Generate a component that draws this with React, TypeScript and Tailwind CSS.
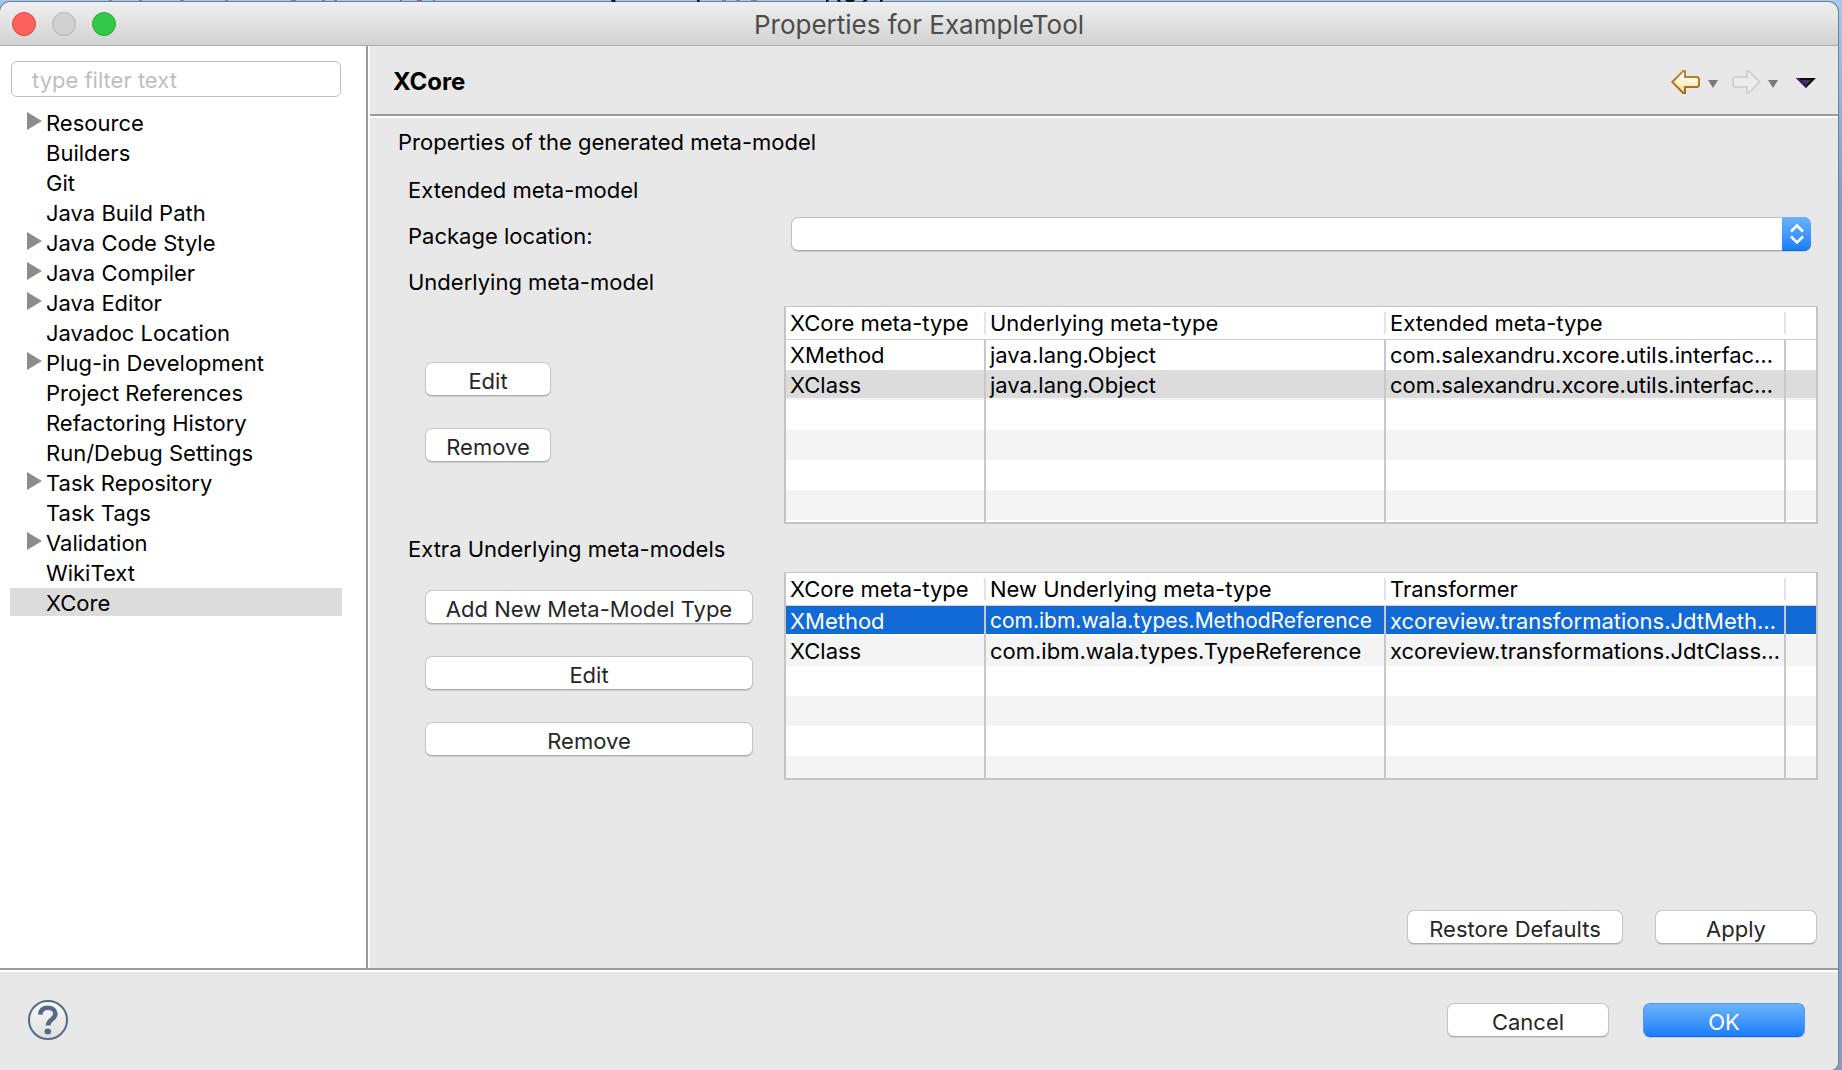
import { useId, useState } from "react";

type TreeNode = { label: string; expandable?: boolean };

const TREE: TreeNode[] = [
  { label: "Resource", expandable: true },
  { label: "Builders" },
  { label: "Git" },
  { label: "Java Build Path" },
  { label: "Java Code Style", expandable: true },
  { label: "Java Compiler", expandable: true },
  { label: "Java Editor", expandable: true },
  { label: "Javadoc Location" },
  { label: "Plug-in Development", expandable: true },
  { label: "Project References" },
  { label: "Refactoring History" },
  { label: "Run/Debug Settings" },
  { label: "Task Repository", expandable: true },
  { label: "Task Tags" },
  { label: "Validation", expandable: true },
  { label: "WikiText" },
  { label: "XCore" },
];

/* Sliver of the editor line that shows above the window. */
function EditorSliver() {
  return (
    <svg aria-hidden="true" width="900" height="2" viewBox="0 0 900 2" className="absolute top-0 left-0">
      <path
        d="M109 0h3v1h-3zM139 0h3v1h-3zM180 0h4v1h-4zM225 0h3v1h-3zM291 0h5v1h-5zM322 0h3v1h-3zM334 0h3v1h-3zM722 0h4v1h-4zM736 0h4v1h-4zM751 0h6v1h-6z"
        fill="#7089a6"
      />
      <path d="M400 0h2v1h-2zM417 0h5v1h-5zM433 0h2v1h-2z" fill="#8a5fa8" />
      <path
        d="M611 0h4l1 2h-4zM697 0h3l-1 2h-2zM826 0h3l-1 2h-2zM837 0h3l1 2h-3zM845 0h10l-2 2h-6zM864 0h4l-3 2h-3zM880 0h3l-1 2h-2z"
        fill="#141a22"
      />
    </svg>
  );
}

function TitleBar() {
  return (
    <header className="relative flex h-11 shrink-0 items-center justify-center rounded-t-[10px] border-b border-[#acacac] bg-linear-to-b from-[#f0f0f0] to-[#d2d2d2]">
      <div className="absolute left-3 flex gap-4">
        <button aria-label="Close" className="size-6 rounded-full border border-[#e0443e] bg-[#fc615d]" />
        <button aria-label="Minimize" className="size-6 rounded-full border border-[#b4b4b4] bg-[#d0d0d0]" />
        <button aria-label="Zoom" className="size-6 rounded-full border border-[#24ac38] bg-[#34c84a]" />
      </div>
      <h1 className="pt-0.5 text-[26px] leading-8 text-[#4c4c4c]">Properties for ExampleTool</h1>
    </header>
  );
}

function Sidebar() {
  const [selected, setSelected] = useState("XCore");
  return (
    <nav className="w-[370px] shrink-0 border-r-2 border-white bg-white">
      <div className="h-full border-r-2 border-[#9c9c9c] pt-[15px] pr-6 pl-[10px]">
        <input
          type="text"
          aria-label="Filter"
          placeholder="type filter text"
          className="ml-px block h-9 w-[330px] rounded-[6px] border border-[#bdbdbd] bg-white pt-0.5 pl-5 placeholder:text-[#bfbfbf]"
        />
        <ul className="mt-[11px]">
          {TREE.map((node) => (
            <li
              key={node.label}
              className={
                node.label === selected
                  ? "mb-0.5 flex h-7 items-start bg-[#dcdcdc] pl-4"
                  : "mb-0.5 flex h-7 items-start pl-4"
              }
            >
              {node.expandable ? (
                <button aria-label={"Expand " + node.label} className="w-5 pt-1">
                  <svg width="16" height="18" viewBox="0 0 16 18" className="ml-px">
                    <path d="M0 0L15 9L0 18Z" fill="#8c8c8c" />
                  </svg>
                </button>
              ) : (
                <span className="w-5" />
              )}
              <button onClick={() => setSelected(node.label)} className="leading-[30px]">
                {node.label}
              </button>
            </li>
          ))}
        </ul>
      </div>
    </nav>
  );
}

const ARROW = "M1.3 12L12.2 1H14V7H26.5L28 8.5V15.5L26.5 17H14V23H12.2Z";

function SmallCaret() {
  return (
    <svg width="10" height="8" viewBox="0 0 10 8">
      <path d="M0 0H10L5 8Z" fill="#7a7a7a" />
    </svg>
  );
}

function HistoryBar() {
  return (
    <div className="flex items-center pt-[3px]">
      <button aria-label="Back">
        <svg width="30" height="24" viewBox="0 0 30 24">
          <defs>
            <linearGradient id="back-fill" x1="0" y1="0" x2="0" y2="1">
              <stop offset="0.3" stopColor="#fffdf2" />
              <stop offset="0.8" stopColor="#fbe5a2" />
            </linearGradient>
            <linearGradient id="back-line" x1="0" y1="0" x2="0" y2="1">
              <stop offset="0" stopColor="#c48a2c" />
              <stop offset="1" stopColor="#a5651a" />
            </linearGradient>
          </defs>
          <path d={ARROW} fill="url(#back-fill)" stroke="url(#back-line)" strokeWidth="2" />
        </svg>
      </button>
      <button aria-label="Back history" className="mt-1 ml-[7px]">
        <SmallCaret />
      </button>
      <button aria-label="Forward" className="ml-[13px]">
        <svg width="30" height="24" viewBox="0 0 30 24">
          <path d={ARROW} transform="matrix(-1 0 0 1 30 0)" fill="#ececec" stroke="#d2d2d2" strokeWidth="2" />
        </svg>
      </button>
      <button aria-label="Forward history" className="mt-1 ml-[7px]">
        <SmallCaret />
      </button>
      <button aria-label="View menu" className="mt-0.5 ml-[18px]">
        <svg width="20" height="10" viewBox="0 0 20 10">
          <path d="M0 0H20L10 10Z" fill="#120a14" />
          <path d="M0 0H3L11 9L10 10Z" fill="#3c1494" />
          <path d="M5 2H15L10 7.5Z" fill="#4a3450" />
        </svg>
      </button>
    </div>
  );
}

function PushButton({ label, width }: { label: string; width: string }) {
  return (
    <button
      className={
        width +
        " h-[34px] rounded-[7px] border border-[#c6c6c6] border-b-[#adadad] bg-white pt-1 leading-7 text-[#262626] shadow-[0_1px_1px_rgba(0,0,0,0.12)]"
      }
    >
      {label}
    </button>
  );
}

type MetaTableProps = {
  label: string;
  headers: string[];
  rows: string[][];
  selected: number;
  focused?: boolean;
  height: string;
};

function MetaTable({ label, headers, rows, selected, focused, height }: MetaTableProps) {
  const lines = [...rows, ...Array.from({ length: 5 }, () => ["", "", ""])];
  const rowClass = (i: number) => {
    if (i === selected) {
      return focused
        ? "bg-[linear-gradient(#126ad6_28px,#ffffff_28px)] text-white"
        : "bg-[linear-gradient(#dcdcdc_28px,#f4f4f4_28px)]";
    }
    return i % 2 ? "bg-[#f4f4f4]" : "bg-white";
  };
  return (
    <div className={height + " overflow-hidden border-2 border-t border-[#c4c4c4] bg-white"}>
      <table aria-label={label} className="w-full table-fixed border-separate border-spacing-0 text-left">
        <colgroup>
          <col className="w-[200px]" />
          <col className="w-[400px]" />
          <col className="w-[400px]" />
          <col />
        </colgroup>
        <thead>
          <tr>
            {headers.map((h) => (
              <th key={h} scope="col" className="border-b border-[#d0d0d0] px-0 py-[5px] font-normal">
                <div className="h-[22px] border-r-2 border-[#e4e4e4] pl-1 leading-[22px] whitespace-nowrap">{h}</div>
              </th>
            ))}
            <td className="border-b border-[#d0d0d0]" />
          </tr>
        </thead>
        <tbody>
          {lines.map((cells, i) => (
            <tr key={i} className={rowClass(i)}>
              {cells.map((c, j) => (
                <td
                  key={j}
                  className={
                    j === 1 && c.length > 33
                      ? "h-[30px] border-r-2 border-[#c8c8c8] p-0 pl-1 text-[21px] leading-[30px] whitespace-nowrap"
                      : "h-[30px] border-r-2 border-[#c8c8c8] p-0 pl-1 leading-[30px] whitespace-nowrap"
                  }
                >
                  {c}
                </td>
              ))}
              <td className="p-0" />
            </tr>
          ))}
        </tbody>
      </table>
    </div>
  );
}

function Chevrons() {
  return (
    <svg width="14" height="20" viewBox="0 0 14 20" fill="none" stroke="#ffffff" strokeWidth="2.6">
      <path d="M1 7.5L7 1.5L13 7.5" />
      <path d="M1 12.5L7 18.5L13 12.5" />
    </svg>
  );
}

function PropertyPage() {
  const comboId = useId();
  return (
    <main className="flex min-w-0 grow flex-col bg-[#e8e8e8]">
      <div className="flex h-[70px] shrink-0 items-center justify-between border-b-2 border-[#9c9c9c] pr-[22px] pl-[23px]">
        <h2 className="pt-[3px] text-[24px] font-bold">XCore</h2>
        <HistoryBar />
      </div>
      <div className="flex grow flex-col border-t-2 border-white pr-5 pb-6 pl-7">
        <p className="mt-[10px] leading-7">Properties of the generated meta-model</p>
        <div className="mt-5 grid grid-cols-[376px_minmax(0,1fr)] pl-[10px]">
          <h3 className="col-span-2 leading-7">Extended meta-model</h3>
          <label htmlFor={comboId} className="mt-[18px] leading-7">
            Package location:
          </label>
          <div className="relative mt-[13px] mr-[7px] ml-[7px] h-[34px]">
            <select
              id={comboId}
              className="block h-full w-full appearance-none rounded-[7px] border border-[#c0c0c0] border-b-[#a8a8a8] bg-white pl-3 shadow-[0_1px_1px_rgba(0,0,0,0.12)]"
            />
            <span className="pointer-events-none absolute inset-y-0 right-0 flex w-[29px] items-center justify-center rounded-r-[7px] border-b border-[#1166ee] bg-linear-to-b from-[#6bb3f8] to-[#187dfd]">
              <Chevrons />
            </span>
          </div>
          <h3 className="col-span-2 mt-[17px] leading-7">Underlying meta-model</h3>
          <div className="mt-[66px] ml-[17px] flex flex-col items-start gap-8">
            <PushButton label="Edit" width="w-[126px]" />
            <PushButton label="Remove" width="w-[126px]" />
          </div>
          <div className="mt-[10px]">
            <MetaTable
              label="Underlying meta-model"
              headers={["XCore meta-type", "Underlying meta-type", "Extended meta-type"]}
              rows={[
                ["XMethod", "java.lang.Object", "com.salexandru.xcore.utils.interfac…"],
                ["XClass", "java.lang.Object", "com.salexandru.xcore.utils.interfac…"],
              ]}
              selected={1}
              height="h-[218px]"
            />
          </div>
          <h3 className="col-span-2 mt-[11px] leading-7">Extra Underlying meta-models</h3>
          <div className="mt-[27px] ml-[17px] flex flex-col items-start gap-8">
            <PushButton label="Add New Meta-Model Type" width="w-[328px]" />
            <PushButton label="Edit" width="w-[328px]" />
            <PushButton label="Remove" width="w-[328px]" />
          </div>
          <div className="mt-[9px]">
            <MetaTable
              label="Extra Underlying meta-models"
              headers={["XCore meta-type", "New Underlying meta-type", "Transformer"]}
              rows={[
                ["XMethod", "com.ibm.wala.types.MethodReference", "xcoreview.transformations.JdtMeth…"],
                ["XClass", "com.ibm.wala.types.TypeReference", "xcoreview.transformations.JdtClass…"],
              ]}
              selected={0}
              focused
              height="h-[208px]"
            />
          </div>
        </div>
        <div className="mt-auto mr-px flex justify-end gap-8">
          <PushButton label="Restore Defaults" width="w-[216px]" />
          <PushButton label="Apply" width="w-[162px]" />
        </div>
      </div>
    </main>
  );
}

function Footer() {
  return (
    <footer className="shrink-0 border-t-2 border-[#9c9c9c]">
      <div className="flex h-[100px] items-center justify-between border-t-2 border-white bg-[#e8e8e8] pr-[33px] pb-0.5 pl-7">
        <button
          aria-label="Help"
          className="flex size-10 items-center justify-center rounded-full border-2 border-[#566a88] bg-linear-to-b from-[#fafafa] to-[#dedede]"
        >
          <svg width="20" height="30" viewBox="0 0 20 30">
            <path
              d="M2.3 9.6C2.6 4.8 5.6 2.8 9.8 2.8C14.4 2.8 17.4 5.2 17.4 8.8C17.4 14.6 10 14.4 10 20.6"
              fill="none"
              stroke="#566a88"
              strokeWidth="4.6"
            />
            <ellipse cx="9.8" cy="26.4" rx="3.3" ry="2.9" fill="#566a88" />
          </svg>
        </button>
        <div className="flex gap-[34px]">
          <PushButton label="Cancel" width="w-[162px]" />
          <button className="h-[34px] w-[162px] rounded-[7px] border border-[#4a9bf0] border-b-[#1163ee] bg-linear-to-b from-[#6bb3f8] to-[#187dfd] pt-1 leading-7 text-white shadow-[0_1px_1px_rgba(0,0,0,0.12)]">
            OK
          </button>
        </div>
      </div>
    </footer>
  );
}

export default function App() {
  return (
    <div className="relative flex min-h-screen flex-col bg-linear-to-b from-[#a4c8ee] to-[#819dbf] to-20% pt-0.5 pr-1 font-['Inter','Liberation_Sans',sans-serif] text-[22px] text-black">
      <EditorSliver />
      <div className="flex grow flex-col overflow-hidden rounded-t-[10px] rounded-br-[8px] bg-[#e8e8e8] shadow-[0_0_0_1px_#6d8098]">
        <TitleBar />
        <div className="flex grow">
          <Sidebar />
          <PropertyPage />
        </div>
        <Footer />
      </div>
    </div>
  );
}
